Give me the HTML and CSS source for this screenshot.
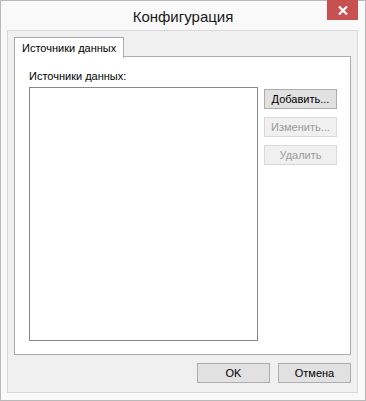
FILE: index.html
```html
<!DOCTYPE html>
<html>
    <head>
        <meta charset="utf-8">
        <link rel="stylesheet" href="styles.css">
    </head>
    <body>
        <div class = "window">
            <div class = "titlebar">
                <div></div>
                <div class = "title">Конфигурация</div>
                <div class = "title-buttons">
                    <button class = "close-btn" title = "Закрыть">
                        <svg width = "10" height = "9" viewBox = "0 0 10 9">
                            <path d = "M1 0.5 L9 8.5 M9 0.5 L1 8.5" stroke = "white" stroke-width = "2.2" fill = "none"/>
                        </svg>
                    </button>
                </div>
            </div>
            <div class = "client">
                <div class = "tabs">
                    <div class = "tab active">Источники данных</div>
                </div>
                <div class = "tab-page">
                    <div class = "label">Источники данных:</div>
                    <div class = "sources">
                        <div class = "listbox"></div>
                        <div class = "side-buttons">
                            <button class = "btn">Добавить...</button>
                            <button class = "btn" disabled>Изменить...</button>
                            <button class = "btn" disabled>Удалить</button>
                        </div>
                    </div>
                </div>
                <div class = "dialog-buttons">
                    <button class = "btn">OK</button>
                    <button class = "btn">Отмена</button>
                </div>
            </div>
        </div>
    </body>
</html>
```

FILE: styles.css
```css
body {
    margin: 0;
    font-family: "Liberation Sans", Arial, sans-serif;
    font-size: 11px;
    color: black;
    background-color: white;
}
.window {
    box-sizing: border-box;
    width: 366px;
    height: 401px;
    border: 1px solid #b9b9b9;
    background-color: #f9f9f9;
    display: flex;
    flex-direction: column;
}
.titlebar {
    height: 29px;
    display: grid;
    grid-template-columns: 1fr auto 1fr;
}
.title {
    font-size: 15px;
    line-height: 29px;
    color: #1a1a1a;
    padding-top: 1px;
}
.title-buttons {
    display: flex;
    justify-content: flex-end;
    align-items: flex-start;
    padding-right: 7px;
}
.close-btn {
    width: 31px;
    height: 20px;
    margin-top: -1px;
    border: none;
    padding: 0;
    background-color: #c75050;
    display: flex;
    align-items: center;
    justify-content: center;
    cursor: pointer;
}
.client {
    margin: 0 7px 0 6px;
    height: 363px;
    box-sizing: border-box;
    border: 1px solid #d9d9d9;
    background-color: #f0f0f0;
    padding: 6px 6px 0 6px;
    display: flex;
    flex-direction: column;
}
.tabs {
    display: flex;
    height: 20px;
}
.tab {
    background-color: white;
    border: 1px solid #adadad;
    border-bottom: none;
    padding: 3px 7px 0 7px;
    line-height: 15px;
    position: relative;
    z-index: 1;
    box-sizing: border-box;
    height: 21px;
}
.tab-page {
    box-sizing: border-box;
    width: 337px;
    height: 299px;
    margin-top: -1px;
    border: 1px solid #adadad;
    background-color: white;
    padding: 12px 0 0 14px;
}
.label {
    line-height: 15px;
    height: 18px;
}
.sources {
    display: flex;
    gap: 6px;
}
.listbox {
    width: 229px;
    height: 254px;
    box-sizing: border-box;
    border: 1px solid #828790;
    background-color: white;
}
.side-buttons {
    display: flex;
    flex-direction: column;
    gap: 8px;
    padding-top: 2px;
}
.btn {
    box-sizing: border-box;
    width: 73px;
    height: 20px;
    padding: 0;
    font-family: inherit;
    font-size: 11px;
    line-height: 16px;
    color: black;
    background-color: #e1e1e1;
    border: 1px solid #adadad;
}
.btn:disabled {
    color: #9a9a9a;
    background-color: #f0f0f0;
    border-color: #d9d9d9;
}
.dialog-buttons {
    display: flex;
    justify-content: flex-end;
    gap: 8px;
    margin-top: 8px;
}
```
